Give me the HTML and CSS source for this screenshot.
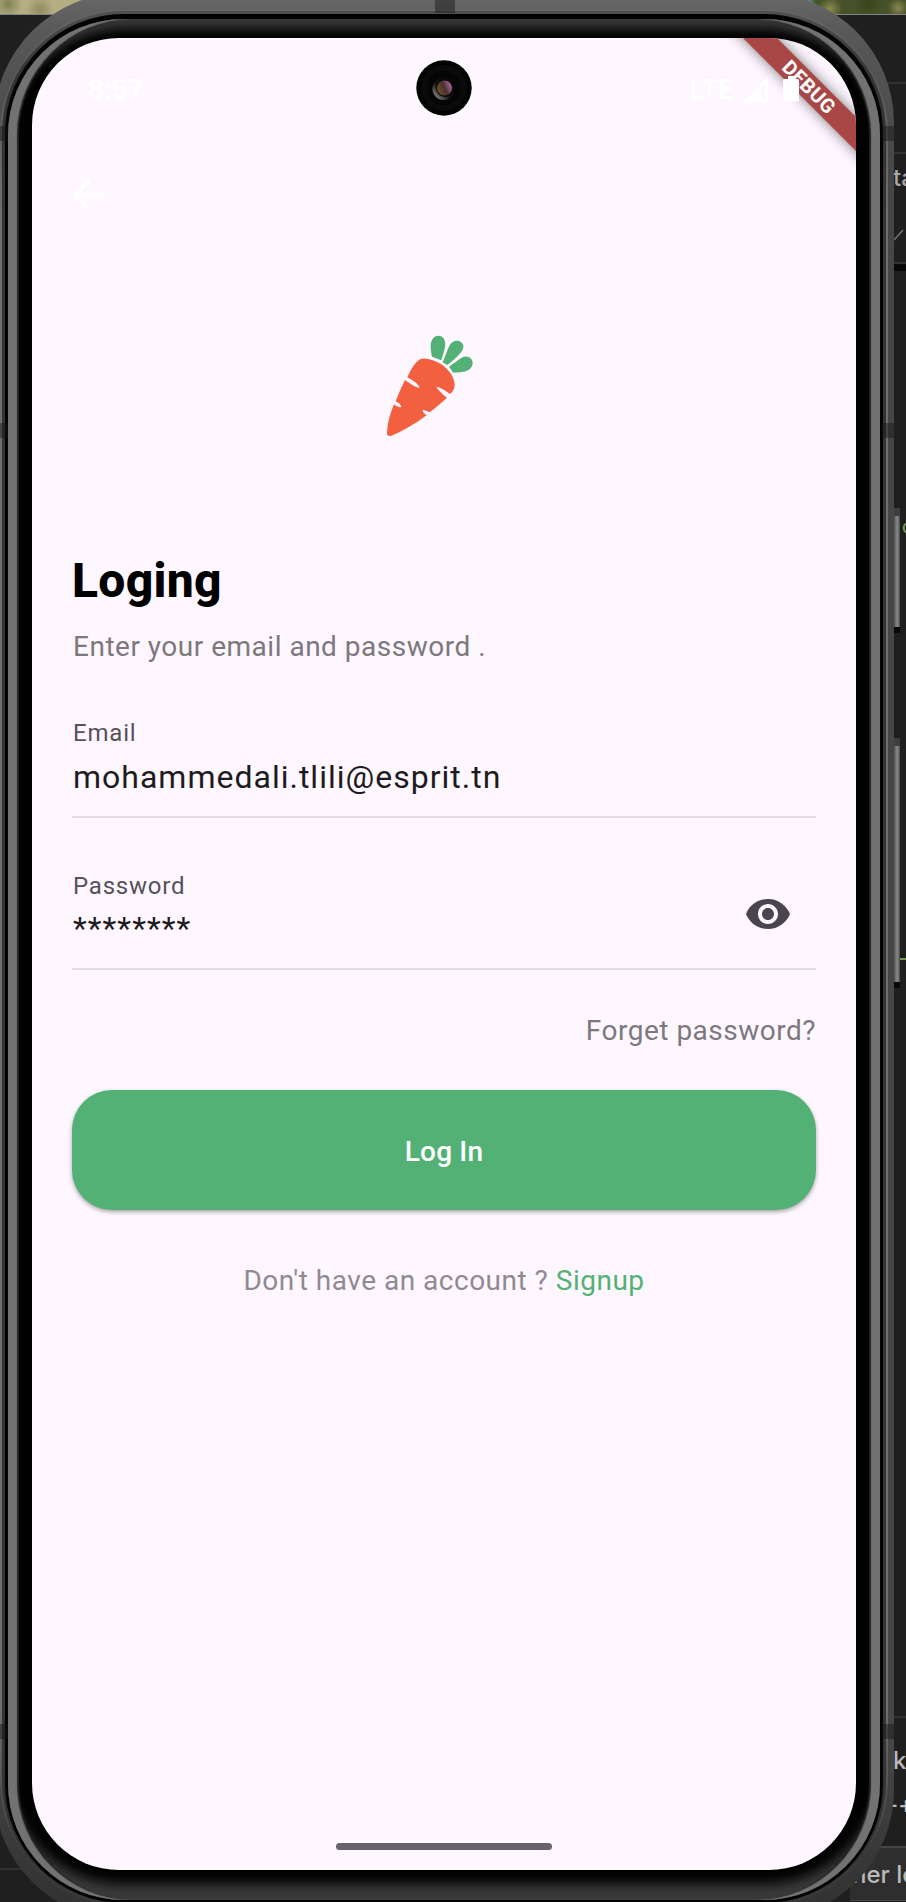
FILE: index.html
```
<!DOCTYPE html>
<html lang="en">
<head>
<meta charset="utf-8">
<title>Login</title>
<link rel="stylesheet" href="styles.css">
</head>
<body>
<div class="desktop">
  <div class="photo"></div>
  <div class="editor">
    <span class="rule r1"></span><span class="rule r2"></span><span class="rule r3"></span>
    <span class="rule r4"></span><span class="panel"></span><span class="rule r5"></span>
    <span class="frag f1">ta</span>
    <svg class="frag tick" width="10" height="12" viewBox="0 0 10 12"><path d="M0 11L9 1" stroke="#777" stroke-width="1.5"/></svg>
    <span class="frag f2">c</span>
    <span class="wave"></span>
    <span class="frag f3">k</span>
    <span class="frag f4">-+</span>
    <span class="frag f5">her lo</span>
  </div>
  <span class="key key-power"></span>
  <span class="key key-volume"></span>

  <div class="phone">
    <div class="trim"><div class="groove"><div class="seam"><div class="bezel">
      <main class="screen">
        <div class="debug"><span>DEBUG</span></div>
        <header class="status">
          <span class="clock">8:57</span>
          <span class="signal">
            <span class="lte">LTE</span>
            <svg class="bars" width="25" height="25" viewBox="0 0 25 25"><path d="M0 25L25 0V25Z M18 11V22H22V7Z" fill="#fff" fill-rule="evenodd"/></svg>
            <svg class="battery" width="16" height="26" viewBox="0 0 16 26"><path d="M5 0H11V3H14.500Q16 3 16 4.500V24Q16 25.500 14.500 25.500H1.500Q0 25.500 0 24V4.500Q0 3 1.500 3H5Z" fill="#fff"/></svg>
          </span>
        </header>
        <nav class="nav">
          <svg width="32" height="32" viewBox="4 4 16 16"><path d="M20 11H7.830l5.590-5.590L12 4l-8 8 8 8 1.410-1.410L7.830 13H20v-2z" fill="#fff"/></svg>
        </nav>
        <svg class="logo" width="140" height="150" viewBox="0 0 420 450">
          <g fill="#53b175">
            <path d="M216 140C212 120 210 104 215 92C221 76 240 72 250 84C259 97 256 112 251 127L244 151Z"/>
            <path d="M248 157L266 112C272 96 284 89 297 93C311 98 314 112 306 123C296 138 280 150 262 165Z"/>
            <path d="M267 170C282 160 296 148 309 141C323 135 338 145 338 158C338 174 325 183 309 185C298 187 288 187 280 188Z"/>
          </g>
          <path fill="#f3603f" d="M180 148C193 142 220 149 243 162C268 179 284 203 284 225C284 236 279 244 270 252C253 240 240 231 229 231C235 242 249 254 261 263Q231 290 209 307C200 302 193 299 188 300C188 307 193 311 200 316C166 341 126 365 94 377C85 380 80 376 81 367C83 337 90 311 102 283C110 289 117 293 124 291C123 284 116 279 107 274Q118 244 135 210C151 222 166 232 179 234C175 221 160 212 142 202Q160 160 180 148Z"/>
        </svg>
        <h1 class="title">Loging</h1>
        <p class="subtitle">Enter your email and password .</p>
        <form class="form">
          <div class="field">
            <label class="label">Email</label>
            <span class="value">mohammedali.tlili@esprit.tn</span>
          </div>
          <div class="field with-icon">
            <div>
              <label class="label">Password</label>
              <span class="value">********</span>
            </div>
            <svg class="eye" width="48" height="48" viewBox="0 0 24 24"><path fill="#49454f" d="M12 4.500C7 4.500 2.730 7.610 1 12c1.730 4.390 6 7.500 11 7.500s9.270-3.110 11-7.500c-1.730-4.390-6-7.500-11-7.500zM12 17c-2.760 0-5-2.240-5-5s2.240-5 5-5 5 2.240 5 5-2.240 5-5 5zm0-8c-1.660 0-3 1.340-3 3s1.340 3 3 3 3-1.340 3-3-1.340-3-3-3z"/></svg>
          </div>
          <a class="forgot">Forget password?</a>
          <button class="login" type="button">Log In</button>
        </form>
        <p class="signup">Don't have an account ? <a>Signup</a></p>
        <span class="home"></span>
        <svg class="camera" width="56" height="56" viewBox="0 0 56 56">
          <defs>
            <linearGradient id="rim" x1="0" y1="1" x2="1" y2="0"><stop offset="0.150" stop-color="#777"/><stop offset="0.450" stop-color="#111"/><stop offset="1" stop-color="#080808"/></linearGradient>
            <linearGradient id="lens" x1="0" y1=".7" x2="1" y2=".3"><stop offset="0" stop-color="#75551d"/><stop offset="0.500" stop-color="#4b3031"/><stop offset="1" stop-color="#b56aa5"/></linearGradient>
          </defs>
          <circle cx="28" cy="28" r="27.700" fill="#020202"/>
          <circle cx="28" cy="28" r="23" fill="#0a0a0a"/>
          <circle cx="28" cy="28" r="18" fill="#050505" stroke="#0e0e0e"/>
          <circle cx="27.500" cy="29" r="11" fill="url(#rim)"/>
          <circle cx="29" cy="28" r="9" fill="#0b0809"/>
          <circle cx="28.500" cy="28" r="7.500" fill="url(#lens)"/>
        </svg>
      </main>
    </div></div></div></div>
    <span class="band left b1"></span><span class="band left b2"></span><span class="band left b3"></span>
    <span class="band right b1"></span><span class="band right b2"></span><span class="band right b3"></span>
    <span class="band top"></span>
  </div>
</div>
</body>
</html>
```

FILE: styles.css
```
* { box-sizing: border-box; }
body { margin: 0; font-family: Roboto, "Liberation Sans", sans-serif; background: #1f1f1f; }
h1, p { margin: 0; }

.desktop { position: relative; width: 906px; height: 1902px; overflow: hidden; background: #1f1f1f; }
.photo {
  height: 15px; border-bottom: 1px solid #858585;
  background:
    radial-gradient(circle at 8px 4px, #7c8255 0, transparent 14px),
    radial-gradient(circle at 40px 10px, #918b5e 0, transparent 14px),
    radial-gradient(circle at 806px 4px, #6fb1c4 0, transparent 10px),
    radial-gradient(circle at 830px 9px, #8d8a50 0, transparent 12px),
    radial-gradient(circle at 868px 3px, #39441b 0, transparent 15px),
    radial-gradient(circle at 898px 8px, #8a8656 0, transparent 10px),
    linear-gradient(90deg, #b5ad83 0 100px, #48522a 780px);
}

/* Slices of the windows behind the device */
.editor > * { position: absolute; }
.rule { left: 880px; right: 0; height: 2px; background: #323232; }
.r1 { top: 82px; }
.r2 { top: 152px; }
.r3 { top: 262px; height: 9px; border-top: 2px solid #323232; background: #090909; }
.r4 { top: 1716px; }
.r5 { top: 1868px; left: 0; right: auto; width: 24px; }
.panel { left: 850px; right: 0; top: 1846px; height: 55px; background: #2e2e2e; border: solid #454545; border-width: 2px 0 1px; }
.frag { color: #b9b9b9; font: 500 24px/30px Inter, sans-serif; white-space: nowrap; }
.f1 { left: 893px; top: 163px; color: #a6a6a6; }
.tick { left: 894px; top: 229px; }
.f2 { left: 902px; top: 512px; color: #6f9b50; font-size: 17px; }
.wave { left: 900px; right: 0; top: 958px; height: 2px; background: #6f9b50; }
.f3 { left: 893px; top: 1746px; }
.f4 { left: 887px; top: 1790px; }
.f5 { left: 852px; top: 1860px; }

.key {
  position: absolute; left: 893px; width: 7px;
  background: linear-gradient(90deg, #333, #777 40%, #858585 65%, #4a4a4a);
  border: solid #080808; border-width: 0 0 6px;
}
.key::before { content: ""; display: block; height: 8px; background: #3e3e3e; }
.key-power { top: 508px; height: 125px; }
.key-volume { top: 738px; height: 250px; }

/* Device body, built from nested shells */
.phone {
  position: absolute; left: -6px; top: -7px; width: 900px; height: 1927px; padding: 16px 6px 14px;
  border-radius: 130px;
  background: linear-gradient(#686868 0, #585858 40px, #464646 180px, #464646 1750px, #303030);
}
.trim { height: 100%; padding: 2px 2px; border-radius: 124px; background: linear-gradient(#666, #555 60px, #6e6e6e 200px, #6e6e6e 1700px, #3a3a3a 1850px); }
.groove { height: 100%; padding: 3px 3px 1px; border-radius: 122px; background: linear-gradient(#505050, #333 60px, #333); }
.seam { height: 100%; padding: 5px 3px 3px; border-radius: 119px; background: #030303; }
.bezel {
  height: 100%; padding: 19px 24px 0; border-radius: 116px; background: #020202;
  box-shadow: inset 9px 0 1px #727272, inset -9px 0 1px #727272, inset 11px 0 1px #222, inset -11px 0 1px #222,
    inset 0 10px 10px #363636, inset 0 -16px 12px #3a3a3a;
}

.band { position: absolute; width: 12px; height: 15px; background: rgba(20, 20, 20, .45); }
.band.left { left: 0; width: 14px; }
.band.right { right: 0; }
.b1 { top: 133px; }
.b2 { top: 430px; }
.b3 { top: 1731px; }
.band.top { left: 441px; top: 0; width: 20px; height: 20px; }

/* App screen */
.screen {
  position: relative; display: flex; flex-direction: column; width: 824px; height: 1832px; padding: 0 40px;
  overflow: hidden; border-radius: 87px; background: #fef7ff;
}
.camera { position: absolute; left: 384px; top: 22px; }

.debug {
  position: absolute; left: 656px; top: 36px; width: 240px; height: 24px;
  transform: rotate(45deg);
  background: #a94646; color: #fff; box-shadow: 0 0 14px rgba(0, 0, 0, .5);
  font-size: 20px; font-weight: 700; line-height: 24px; text-align: center; letter-spacing: .5px; text-indent: 3px;
}

.status {
  position: relative; display: flex; flex: none; justify-content: space-between; align-items: center;
  height: 102px; padding: 0 17px 0 16px; color: #fff; font-size: 28px;
}
.clock { font-weight: 500; }
.signal { display: flex; align-items: center; }
.lte { font-weight: 500; }
.bars { margin-left: 9px; }
.battery { margin-left: 15px; }
.nav { display: flex; flex: none; align-items: center; height: 110px; }
.logo { flex: none; margin: 60px 0 0 288px; }

.title { margin-top: 93px; color: #000; font-size: 48px; line-height: 56px; font-weight: 800; letter-spacing: .3px; }
.subtitle { margin-top: 18px; padding-left: 1px; color: #7d777e; font-size: 28px; line-height: 40px; letter-spacing: .5px; }

.form { display: flex; flex-direction: column; margin-top: 49px; }
.field { height: 102px; border-bottom: 2px solid #e1dbe2; }
.field + .field { margin-top: 50px; }
.with-icon { display: flex; justify-content: space-between; padding-right: 24px; }
.with-icon .label { padding-top: 1px; }
.with-icon .value { margin-top: 3px; }
.eye { margin-top: 22px; }
.label { display: block; padding-left: 1px; color: #56515b; font-size: 24px; line-height: 34px; letter-spacing: .8px; }
.value { display: block; margin-top: 5px; padding-left: 1px; color: #1d1b20; font-size: 32px; line-height: 44px; letter-spacing: 1px; }
.forgot { margin-top: 41px; color: #7d777e; font-size: 28px; line-height: 40px; letter-spacing: .5px; text-align: right; }
.login {
  height: 120px; margin-top: 39px; padding: 3px 0 0; border: 0; border-radius: 40px; background: #53b175;
  color: #fff; font: 500 28px/40px Roboto, sans-serif; letter-spacing: .2px;
  box-shadow: 0 2px 4px rgba(0, 0, 0, .35);
}
.signup { margin-top: 51px; color: #8f8a91; font-size: 28px; line-height: 40px; letter-spacing: .5px; text-align: center; }
.signup a { color: #53b175; }
.home { align-self: center; width: 216px; height: 7px; margin-top: auto; margin-bottom: 20px; flex: none; border-radius: 4px; background: #68646b; }
```
